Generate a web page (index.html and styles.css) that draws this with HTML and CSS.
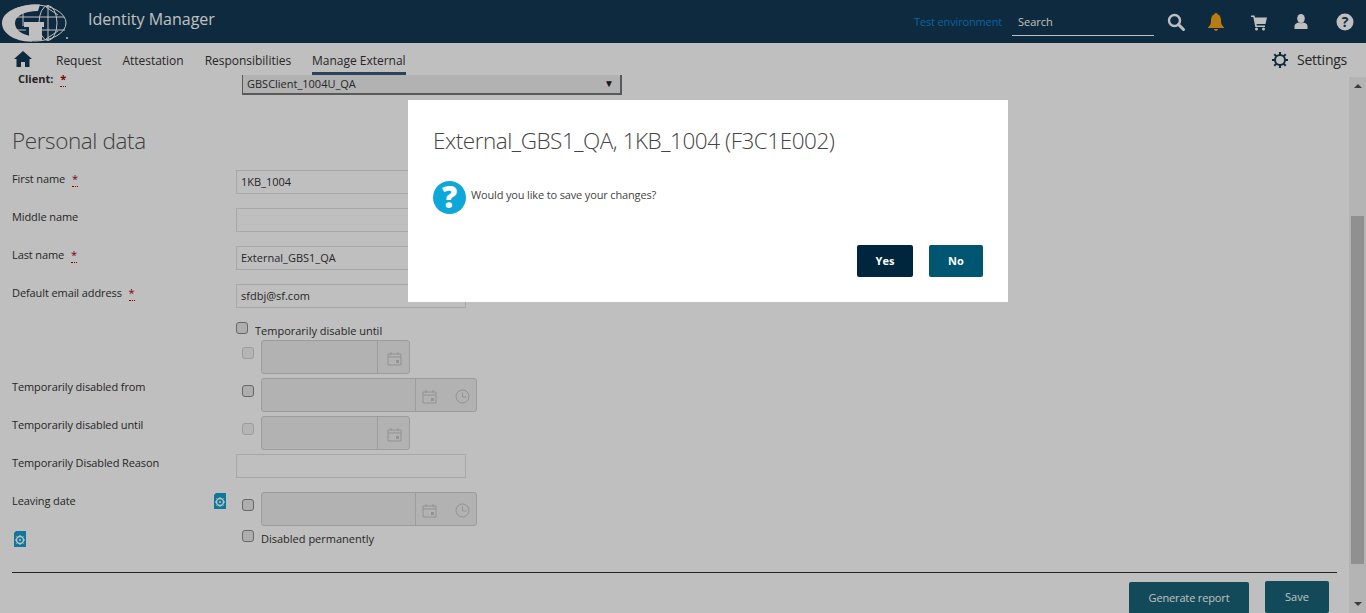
FILE: index.html
```html
<!DOCTYPE html>
<html lang="en">
<head>
  <meta charset="UTF-8">
  <title>Identity Manager</title>
  <link rel="stylesheet" href="styles.css">
</head>
<body>
  <header class="topbar">
    <svg class="logo" viewBox="0 0 66 38" width="66" height="38">
      <g fill="none" stroke="#fff" stroke-width="1">
        <ellipse cx="33" cy="19" rx="31" ry="18"/>
        <ellipse cx="46" cy="19" rx="9" ry="17.500"/>
        <path d="M46 1v36M14 13h48M38 26h25M21 9v13M14 26h10M44 3l12 8M44 35l12-8"/>
      </g>
      <path d="M38 .5C16 0 0 8 0 19c0 11 14 19 30 18.500V32C20 31 13 26 13 19c0-7 9-12 23-12z" fill="#fff"/>
      <path d="M22 18h20v5h-2v13.500L27 37V23h-5z" fill="#fff"/>
      <circle cx="65" cy="34" r="1" fill="#fff"/>
    </svg>
    <span class="app-name">Identity Manager</span>
    <span class="env">Test environment</span>
    <span class="search">Search</span>
    <div class="top-icons">
      <svg viewBox="0 0 18 18" width="18" height="18"><circle cx="7.500" cy="7.500" r="5.500" fill="none" stroke="#fff" stroke-width="2.400"/><path d="M11.500 11.500l5 5" stroke="#fff" stroke-width="3" stroke-linecap="round"/></svg>
      <svg viewBox="0 0 18 18" width="18" height="18"><path d="M9 0c1 0 1.500.6 1.500 1.300C13 2 14 4.500 14 8c0 3 1 4.500 3 6.500v.5H1v-.5C3 12.500 4 11 4 8c0-3.500 1-6 3.500-6.700C7.500.6 8 0 9 0zM7 16h4c0 1-1 1.800-2 1.800S7 17 7 16z" fill="#f9a51a"/></svg>
      <svg class="cart" viewBox="0 0 18 18" width="18" height="18"><path d="M1 2.500h3.500L5 4.500h12l-1.500 6.500H6.500l.3 1.500H15V14H5.300L3.300 4H1z" fill="#fff"/><circle cx="6.500" cy="16" r="1.500" fill="#fff"/><circle cx="13.500" cy="16" r="1.500" fill="#fff"/></svg>
      <svg class="user" viewBox="0 0 18 18" width="18" height="18"><ellipse cx="9" cy="5.500" rx="3.800" ry="4.500" fill="#fff"/><path d="M2.500 16v-3c0-2 2-3 4-3.500 1.500 1 3.500 1 5 0 2 .5 4 1.500 4 3.500v3z" fill="#fff"/></svg>
      <svg class="help" viewBox="0 0 18 18" width="18" height="18"><circle cx="9" cy="9" r="8.500" fill="#fff"/><text x="9" y="13.500" class="help-mark">?</text></svg>
    </div>
  </header>

  <nav class="navbar">
    <svg class="home" viewBox="0 0 18 16" width="18" height="16"><path d="M9 0l9 8h-2.500v8H11v-5H7v5H2.500V8H0z" fill="#133854"/></svg>
    <a>Request</a>
    <a>Attestation</a>
    <a>Responsibilities</a>
    <a class="active">Manage External</a>
    <span class="settings">
      <svg viewBox="0 0 16 16" width="16" height="16"><circle cx="8" cy="8" r="5" fill="none" stroke="#133854" stroke-width="2"/><path d="M8 0v3M8 13v3M0 8h3M13 8h3M2.300 2.300l2.100 2.100M11.600 11.600l2.100 2.100M2.300 13.700l2.100-2.100M11.600 4.400l2.100-2.100" stroke="#133854" stroke-width="2"/></svg>
      Settings
    </span>
  </nav>

  <div class="workspace">
    <main class="content">
      <div class="client-row">
        <strong class="client-label">Client: <i class="req">*</i></strong>
        <div class="client-select">GBSClient_1004U_QA<span class="caret">&#9660;</span></div>
      </div>

      <h2 class="section">Personal data</h2>

      <div class="row"><label>First name <i class="req">*</i></label><div class="input">1KB_1004</div></div>
      <div class="row"><label>Middle name</label><div class="input"></div></div>
      <div class="row"><label>Last name <i class="req">*</i></label><div class="input">External_GBS1_QA</div></div>
      <div class="row"><label>Default email address <i class="req">*</i></label><div class="input">sfdbj@sf.com</div></div>

      <div class="row check-row"><label></label><span class="check"></span><span class="check-text">Temporarily disable until</span></div>

      <div class="row date-row"><label></label><span class="check soft"></span>
        <div class="date short"><span class="date-value"></span><span class="date-btns"><svg class="cal" viewBox="0 0 15 15" width="15" height="15"><use href="#cal"/></svg></span></div>
      </div>
      <div class="row date-row"><label>Temporarily disabled from</label><span class="check"></span>
        <div class="date"><span class="date-value"></span><span class="date-btns"><svg class="cal" viewBox="0 0 15 15" width="15" height="15"><use href="#cal"/></svg><svg class="cal" viewBox="0 0 15 15" width="15" height="15"><use href="#clock"/></svg></span></div>
      </div>
      <div class="row date-row"><label>Temporarily disabled until</label><span class="check soft"></span>
        <div class="date short"><span class="date-value"></span><span class="date-btns"><svg class="cal" viewBox="0 0 15 15" width="15" height="15"><use href="#cal"/></svg></span></div>
      </div>
      <div class="row"><label>Temporarily Disabled Reason</label><div class="input"></div></div>
      <div class="row date-row leaving"><label>Leaving date<svg class="doc-icon" viewBox="0 0 12 16" width="12" height="16"><use href="#doc"/></svg></label><span class="check"></span>
        <div class="date"><span class="date-value"></span><span class="date-btns"><svg class="cal" viewBox="0 0 15 15" width="15" height="15"><use href="#cal"/></svg><svg class="cal" viewBox="0 0 15 15" width="15" height="15"><use href="#clock"/></svg></span></div>
      </div>
      <div class="row perm-row"><label><svg class="doc-icon first" viewBox="0 0 12 16" width="12" height="16"><use href="#doc"/></svg></label><span class="check"></span><span class="check-text">Disabled permanently</span></div>

      <hr class="rule">
      <div class="actions">
        <button class="btn report">Generate report</button>
        <button class="btn save">Save</button>
      </div>
    </main>
    <div class="scrollbar">
      <span class="arrow up"></span>
      <span class="thumb"></span>
      <span class="arrow down"></span>
    </div>
  </div>

  <svg class="defs" width="0" height="0">
    <symbol id="cal" viewBox="0 0 15 15">
      <path d="M1 3h13v11H1zM1 6h13M4 1v3M11 1v3" fill="none" stroke="currentColor" stroke-width="1"/>
      <rect x="9" y="9" width="3" height="3" fill="currentColor"/>
    </symbol>
    <symbol id="clock" viewBox="0 0 15 15">
      <circle cx="7.500" cy="7.500" r="6.500" fill="none" stroke="currentColor"/>
      <path d="M7.500 3.500v4.500h4" fill="none" stroke="currentColor"/>
    </symbol>
    <symbol id="doc" viewBox="0 0 12 16">
      <path d="M2 0h10v16H0V2z" fill="#14a0d2"/>
      <circle cx="6" cy="9" r="3.500" fill="none" stroke="#fff" stroke-width="1.500"/>
      <circle cx="6" cy="9" r="1" fill="#fff"/>
      <path d="M6 4v1.500M6 12.500V14M1 9h1.500M9.500 9H11M2.500 5.500l1 1M8.500 11.500l1 1M2.500 12.500l1-1M8.500 6.500l1-1" stroke="#fff"/>
    </symbol>
  </svg>

  <div class="overlay"></div>

  <div class="modal">
    <h3 class="modal-title">External_GBS1_QA, 1KB_1004 (F3C1E002)</h3>
    <div class="modal-body">
      <svg viewBox="0 0 33 33" width="33" height="33"><circle cx="16.500" cy="16.500" r="16.500" fill="#0ea7da"/><text x="16.500" y="27" class="ask-mark">?</text></svg>
      <span>Would you like to save your changes?</span>
    </div>
    <div class="modal-btns">
      <button class="btn yes">Yes</button>
      <button class="btn no">No</button>
    </div>
  </div>
</body>
</html>
```

FILE: styles.css
```css
* {
  box-sizing: border-box;
}
html, body {
  height: 613px;
  overflow: hidden;
}
body {
  margin: 0;
  background: #fff;
  color: #333;
  font-family: "Open Sans", "Liberation Sans", sans-serif;
  font-size: 11px;
}
.defs {
  display: block;
  height: 0;
}

/* top bar */
.topbar {
  display: flex;
  align-items: center;
  height: 43px;
  background: #133854;
  color: #fff;
  padding: 0 12px 0 2px;
}
.logo {
  flex: none;
  margin-top: 3px;
}
.app-name {
  margin-left: 20px;
  margin-top: -5px;
  font-size: 16px;
}
.env {
  margin-left: auto;
  color: #0f84d8;
  font-size: 11px;
  letter-spacing: -.15px;
}
.search {
  align-self: flex-start;
  width: 142px;
  height: 36px;
  margin-left: 10px;
  padding: 14px 6px 0;
  border-bottom: 1px solid #fff;
  font-size: 11px;
}
.top-icons {
  display: flex;
  gap: 22px;
  margin-left: 13px;
  align-items: center;
}
.top-icons svg {
  display: block;
  overflow: visible;
}
.top-icons .cart {
  margin-left: 3px;
}
.top-icons .user {
  margin-left: 2px;
}
.top-icons .help {
  margin-left: 4px;
}
.help-mark {
  fill: #133854;
  font-size: 14px;
  font-weight: 700;
  text-anchor: middle;
}

/* nav */
.navbar {
  display: flex;
  align-items: flex-start;
  height: 32px;
  padding: 0 19px 0 14px;
  background: #fff;
  font-size: 12px;
  position: relative;
  z-index: 1;
}
.navbar a {
  display: block;
  height: 32px;
  margin-right: 21px;
  padding-top: 9px;
  letter-spacing: -.02px;
}
.home {
  margin: 8px 24px 0 0;
}
.navbar a.active {
  border-bottom: 3px solid #3d5a78;
}
.settings {
  display: flex;
  align-items: center;
  gap: 9px;
  margin-left: auto;
  padding-top: 7px;
  font-size: 14px;
  letter-spacing: -.25px;
}

/* page under the bars */
.workspace {
  display: flex;
  height: 538px;
  overflow: hidden;
}
.content {
  flex: 1;
  padding: 0 12px;
}
.client-row {
  display: flex;
  height: 20px;
}
.client-label {
  width: 230px;
  margin-top: -4px;
  padding-left: 6px;
  font-size: 11px;
}
.req {
  color: #b00000;
  font-style: normal;
  margin-left: 4px;
  border-bottom: 1px dotted #b00000;
}
.client-select {
  display: flex;
  justify-content: space-between;
  width: 380px;
  height: 20px;
  padding: 1px 4px 0;
  background: #eee;
  border-style: solid;
  border-width: 0 2px 2px 1px;
  border-color: #777;
  font-size: 11px;
}
.caret {
  font-size: 10px;
  color: #222;
  padding: 0 2px 0 0;
}
.section {
  margin: 29px 0 12px;
  font-size: 22.500px;
  line-height: 34px;
  font-weight: 300;
  color: #555;
  letter-spacing: -.4px;
}
.row {
  display: flex;
  height: 38px;
}
.row label {
  flex: none;
  position: relative;
  width: 224px;
  padding-top: 1px;
  font-size: 11px;
  letter-spacing: -.1px;
}
.input {
  width: 230px;
  height: 24px;
  padding: 3px 4px 0;
  background: #fff;
  border: 1px solid #e0e0e0;
  font-size: 11px;
}
.check {
  flex: none;
  display: block;
  width: 12px;
  height: 12px;
  background: #e8e8e8;
  border: 1px solid #888;
  border-radius: 3px;
}
.check.soft {
  background: #f2f2f2;
  border-color: #d0d0d0;
}
.check-row {
  height: 18px;
}
.check-row .check-text {
  margin-left: 7px;
  padding-top: 1px;
}
.date-row .check {
  margin: 7px 7px 0 6px;
}
.date {
  display: flex;
  width: 216px;
  height: 34px;
  border: 1px solid #d0d0d0;
  border-radius: 3px;
  background: #eee;
  color: #c4c4c4;
}
.date.short {
  width: 149px;
}
.date-value {
  flex: 1;
  border-right: 1px solid #d0d0d0;
}
.date-btns {
  display: flex;
  align-items: center;
  gap: 18px;
  padding: 2px 6px 0;
}
.date.short .date-btns {
  padding: 2px 7px 0 9px;
}
.leaving {
  height: 38px;
}
.doc-icon {
  position: absolute;
  right: 10px;
  top: 1px;
}
.doc-icon.first {
  left: 2px;
  right: auto;
  top: 1px;
}
.perm-row {
  height: 30px;
}
.perm-row .check {
  margin-left: 6px;
}
.perm-row .check-text {
  margin-left: 7px;
  padding-top: 1px;
}
.rule {
  margin: 12px 0 0;
  border: 0;
  border-top: 1px solid #2e2e2e;
}
.actions {
  display: flex;
  justify-content: flex-end;
  gap: 16px;
  padding: 8px 8px 0 0;
}
.btn {
  border: 0;
  border-radius: 2px;
  color: #fff;
  font-family: inherit;
  font-size: 11px;
  height: 32px;
  padding: 0 0 2px;
}
.report {
  width: 120px;
  background: #186378;
  margin-top: 1px;
  letter-spacing: -.15px;
}
.save {
  width: 64px;
  background: #186378;
}
.scrollbar {
  display: flex;
  flex-direction: column;
  align-items: center;
  flex: none;
  width: 17px;
  margin-top: 2px;
  background: #f1f1f1;
}
.thumb {
  width: 13px;
  height: 348px;
  margin-top: 128px;
  background: #c1c1c1;
}
.arrow {
  width: 0;
  height: 0;
  border-left: 4px solid transparent;
  border-right: 4px solid transparent;
}
.arrow.up {
  margin-top: 7px;
  border-bottom: 4px solid #505050;
}
.arrow.down {
  margin-top: 38px;
  border-top: 4px solid #505050;
}

/* dialog */
.overlay {
  position: absolute;
  inset: 0;
  z-index: 5;
  background: rgba(0, 0, 0, .25);
}
.modal {
  position: absolute;
  z-index: 6;
  left: 408px;
  top: 100px;
  width: 600px;
  height: 202px;
  padding: 24px 25px 0;
  background: #fff;
  color: #444;
}
.modal-title {
  margin: 0;
  font-size: 22.500px;
  line-height: 34px;
  font-weight: 300;
  letter-spacing: -.46px;
}
.modal-body {
  display: flex;
  align-items: center;
  gap: 5px;
  margin-top: 23px;
  font-size: 11px;
  letter-spacing: -.15px;
}
.modal-body svg {
  overflow: visible;
}
.modal-body span {
  margin-top: -7px;
}
.ask-mark {
  fill: #fff;
  font-size: 30px;
  font-weight: 800;
  text-anchor: middle;
}
.modal-btns {
  display: flex;
  justify-content: flex-end;
  gap: 16px;
  margin-top: 31px;
}
.yes {
  width: 56px;
  background: #00263e;
  font-weight: 700;
}
.no {
  width: 54px;
  background: #005670;
  font-weight: 700;
}
```
